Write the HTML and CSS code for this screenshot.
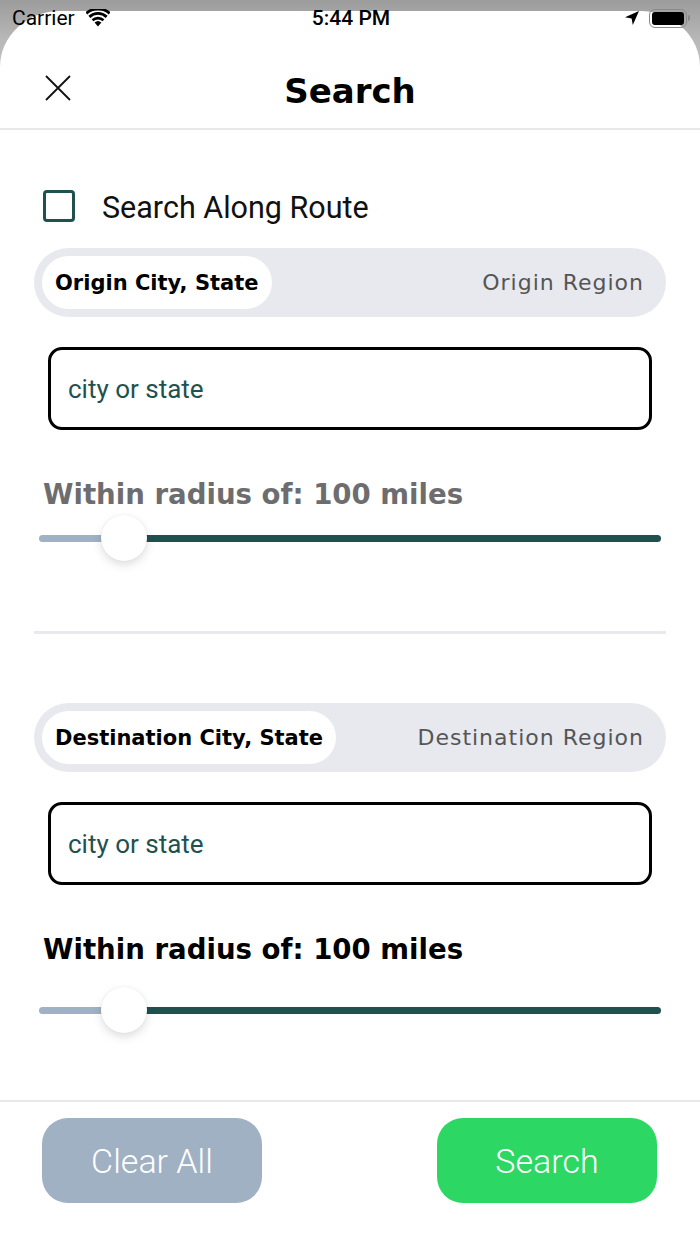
FILE: index.html
```html
<!DOCTYPE html>
<html>
<head>
<meta charset="utf-8">
<link rel="stylesheet" href="styles.css">
</head>
<body>
<div class="statusbar">
  <div class="sb-left">
    <span class="carrier">Carrier</span>
    <svg class="wifi" width="24" height="18" viewBox="0 0 24 18"><path d="M12 17.5 L8.6 13.6 A5 5 0 0 1 15.4 13.6 Z" fill="#000"/><path d="M5.6 10.3 A9.3 9.3 0 0 1 18.4 10.3 L16.6 12.3 A6.6 6.6 0 0 0 7.4 12.3 Z" fill="#000"/><path d="M2.4 6.8 A14 14 0 0 1 21.6 6.8 L19.7 8.9 A11.3 11.3 0 0 0 4.3 8.9 Z" fill="#000"/><path d="M-0.6 3.3 A18.6 18.6 0 0 1 24.6 3.3 L22.7 5.4 A16 16 0 0 0 1.3 5.4 Z" fill="#000"/></svg>
  </div>
  <span class="time">5:44 PM</span>
  <div class="sb-right">
    <svg class="loc" width="16" height="16" viewBox="0 0 16 16"><path d="M15 1 L1 7.2 L7.6 8.4 L8.8 15 Z" fill="#000"/></svg>
    <div class="battery"><div class="bat-body"><div class="bat-fill"></div></div><div class="bat-nub"></div></div>
  </div>
</div>

<div class="sheet">
  <header class="header">
    <svg class="close" width="26" height="26" viewBox="0 0 26 26"><path d="M1 1 L25 25 M25 1 L1 25" stroke="#111" stroke-width="1.8" fill="none"/></svg>
    <h1 class="title">Search</h1>
  </header>

  <main class="content">
    <div class="check-row">
      <span class="checkbox"></span>
      <span class="check-label">Search Along Route</span>
    </div>

    <div class="segment">
      <span class="seg-on">Origin City, State</span>
      <span class="seg-off">Origin Region</span>
    </div>
    <div class="input"><span class="placeholder">city or state</span></div>
    <div class="radius muted">Within radius of: 100 miles</div>
    <div class="slider">
      <div class="track">
        <div class="track-min" style="width:13.7%"></div>
        <div class="track-max"></div>
        <div class="thumb" style="left:13.7%"></div>
      </div>
    </div>

    <div class="divider"></div>

    <div class="segment seg2">
      <span class="seg-on">Destination City, State</span>
      <span class="seg-off">Destination Region</span>
    </div>
    <div class="input"><span class="placeholder">city or state</span></div>
    <div class="radius">Within radius of: 100 miles</div>
    <div class="slider slider2">
      <div class="track">
        <div class="track-min" style="width:13.7%"></div>
        <div class="track-max"></div>
        <div class="thumb" style="left:13.7%"></div>
      </div>
    </div>
  </main>

  <footer class="footer">
    <button class="btn btn-clear">Clear All</button>
    <button class="btn btn-search">Search</button>
  </footer>
</div>
</body>
</html>
```

FILE: styles.css
```css
* { box-sizing: border-box; }
html, body { margin: 0; padding: 0; }
body {
  width: 700px;
  height: 1244px;
  overflow: hidden;
  background: linear-gradient(#9c9c9c 0px, #b8b8b8 40px, #c6c6c6 80px);
  font-family: Roboto, "Liberation Sans", sans-serif;
  position: relative;
}

.statusbar {
  position: absolute;
  top: 0; left: 0; right: 0;
  height: 36px;
  display: flex;
  align-items: center;
  justify-content: space-between;
  padding: 0 10px 0 12px;
  z-index: 5;
  font-family: Roboto, "Liberation Sans", sans-serif;
  color: #000;
}
.sb-left { display: flex; align-items: center; gap: 11px; width: 200px; }
.carrier { font-weight: 400; font-size: 21px; }
.time { font-weight: 500; font-size: 21px; }
.sb-right { display: flex; align-items: center; justify-content: flex-end; gap: 9px; width: 200px; }
.battery { display: flex; align-items: center; }
.bat-body {
  width: 38px; height: 19px;
  border: 1.5px solid #8a8a8a;
  border-radius: 6px;
  padding: 2px;
}
.bat-fill { width: 100%; height: 100%; background: #000; border-radius: 3px; }
.bat-nub { width: 2px; height: 6px; background: #8a8a8a; border-radius: 0 2px 2px 0; margin-left: 1px; }

.sheet {
  position: absolute;
  top: 11px; left: 0; right: 0; bottom: 0;
  background: #fff;
  border-radius: 60px 60px 0 0 / 56px 56px 0 0;
  display: flex;
  flex-direction: column;
}

.header {
  height: 119px;
  padding-top: 52px;
  border-bottom: 2px solid #e8e8ec;
  position: relative;
  display: flex;
  justify-content: center;
}
.close { position: absolute; left: 45px; top: 64px; }
.title {
  margin: 0;
  font-family: "DejaVu Sans", Inter, sans-serif;
  font-weight: 700;
  font-size: 34px;
  line-height: 56px;
  color: #000;
}

.content {
  flex: 1;
  padding: 60px 34px 0;
  display: flex;
  flex-direction: column;
}

.check-row { display: flex; align-items: center; height: 32px; padding-left: 9px; }
.checkbox {
  width: 32px; height: 32px;
  border: 3px solid #1f524f;
  border-radius: 4px;
  flex: none;
}
.check-label {
  margin-left: 27px;
  margin-top: 3px;
  font-size: 30.5px;
  color: #111;
  font-family: Roboto, "Liberation Sans", sans-serif;
}

.segment {
  margin-top: 26px;
  height: 69px;
  background: #e8e9ee;
  border-radius: 35px;
  padding: 8px 22px 8px 8px;
  display: flex;
  align-items: center;
  justify-content: space-between;
  font-family: "DejaVu Sans", Inter, sans-serif;
  font-size: 21px;
}
.seg2 { margin-top: 69px; }
.seg-on {
  height: 53px;
  background: #fff;
  border-radius: 27px;
  padding: 0 13px;
  display: flex;
  align-items: center;
  font-weight: 700;
  color: #000;
}
.seg-off { color: #555; font-weight: 400; font-size: 22px; letter-spacing: 1px; }

.input {
  margin: 30px 14px 0;
  height: 83px;
  border: 3px solid #000;
  border-radius: 14px;
  display: flex;
  align-items: center;
  padding-left: 17px;
}
.placeholder { font-size: 26px; color: #1f524f; font-family: Roboto, "Liberation Sans", sans-serif; }

.radius {
  margin: 48px 0 0 9px;
  font-family: "DejaVu Sans", Inter, sans-serif;
  font-weight: 700;
  font-size: 27.6px;
  line-height: 34px;
  color: #000;
}
.radius.muted { color: #6d6d70; }

.slider { margin: 3px 5px 0; height: 46px; display: flex; align-items: center; }
.slider2 { margin-top: 20px; }
.track { position: relative; width: 100%; height: 7px; display: flex; }
.track-min { background: #9fb1c2; border-radius: 4px 0 0 4px; }
.track-max { flex: 1; background: #1f524f; border-radius: 0 4px 4px 0; }
.thumb {
  position: absolute;
  top: 50%;
  width: 46px; height: 46px;
  margin: -23px 0 0 -23px;
  background: #fff;
  border-radius: 50%;
  box-shadow: 0 4px 10px rgba(0,0,0,0.13), 0 0 2px rgba(0,0,0,0.08);
}

.divider { margin-top: 70px; height: 3px; background: #e8e9ee; }

.footer {
  height: 144px;
  border-top: 2px solid #e8e8ec;
  display: flex;
  justify-content: space-between;
  padding: 16px 43px 0 42px;
  align-items: flex-start;
}
.btn {
  width: 220px;
  height: 85px;
  border: none;
  border-radius: 26px;
  color: #fff;
  font-family: Roboto, "Liberation Sans", sans-serif;
  font-size: 34px;
  font-weight: 300;
}
.btn-clear { background: #9fb1c2; }
.btn-search { background: #2dd763; }
```
